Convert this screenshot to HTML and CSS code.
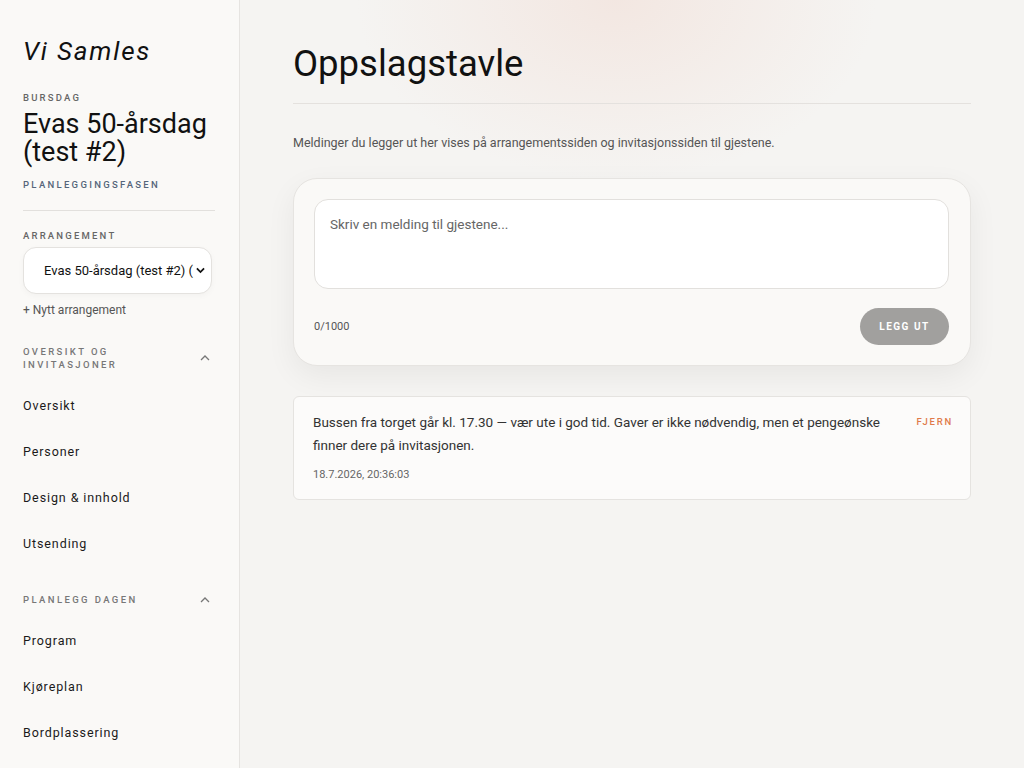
FILE: index.html
```html
<!DOCTYPE html>
<html lang="no">
<head>
    <meta charset="UTF-8">
    <meta name="viewport" content="width=device-width, initial-scale=1.0">
    <title>Oppslagstavle – Vi Samles</title>
    <link rel="stylesheet" href="styles.css">
</head>
<body>

    <aside class="sidebar">
        <div class="brand">Vi Samles</div>

        <div class="event-info">
            <div class="eyebrow">Bursdag</div>
            <h2 class="event-title">Evas 50-årsdag (test #2)</h2>
            <div class="phase">Planleggingsfasen</div>
        </div>

        <div class="event-picker">
            <div class="eyebrow">Arrangement</div>
            <div class="select-box">
                <span class="select-text">Evas 50-årsdag (test #2) (</span>
                <svg class="select-chevron" width="10" height="7" viewBox="0 0 10 7"><path d="M1 1.2 5 5.2 9 1.2" fill="none" stroke="#111" stroke-width="2"/></svg>
            </div>
            <a class="new-event">+ Nytt arrangement</a>
        </div>

        <nav class="nav-group">
            <div class="group-head">
                <span class="group-label">Oversikt og invitasjoner</span>
                <svg class="caret" width="10" height="6" viewBox="0 0 10 6"><path d="M1 5 5 1 9 5" fill="none" stroke="#777" stroke-width="1.3"/></svg>
            </div>
            <a class="nav-item">Oversikt</a>
            <a class="nav-item">Personer</a>
            <a class="nav-item">Design &amp; innhold</a>
            <a class="nav-item">Utsending</a>
        </nav>

        <nav class="nav-group">
            <div class="group-head">
                <span class="group-label">Planlegg dagen</span>
                <svg class="caret" width="10" height="6" viewBox="0 0 10 6"><path d="M1 5 5 1 9 5" fill="none" stroke="#777" stroke-width="1.3"/></svg>
            </div>
            <a class="nav-item">Program</a>
            <a class="nav-item">Kjøreplan</a>
            <a class="nav-item">Bordplassering</a>
        </nav>
    </aside>

    <main class="main">
        <div class="content">
            <h1 class="page-title">Oppslagstavle</h1>
            <p class="intro">Meldinger du legger ut her vises på arrangementssiden og invitasjonssiden til gjestene.</p>

            <div class="composer">
                <div class="composer-input">Skriv en melding til gjestene...</div>
                <div class="composer-foot">
                    <span class="counter">0/1000</span>
                    <button class="post-btn">Legg ut</button>
                </div>
            </div>

            <div class="post">
                <div class="post-body">
                    <p class="post-text">Bussen fra torget går kl. 17.30 — vær ute i god tid. Gaver er ikke nødvendig, men et pengeønske finner dere på invitasjonen.</p>
                    <div class="post-date">18.7.2026, 20:36:03</div>
                </div>
                <a class="remove">Fjern</a>
            </div>
        </div>
    </main>

</body>
</html>
```

FILE: styles.css
```css
* {
    box-sizing: border-box;
}

html, body {
    height: 100%;
}

body {
    margin: 0;
    display: flex;
    font-family: Roboto, "Liberation Sans", sans-serif;
    color: #151515;
    background: #f5f4f2;
    overflow: hidden;
}

/* Sidebar */
.sidebar {
    width: 240px;
    flex-shrink: 0;
    background: #faf9f7;
    border-right: 1px solid #e6e4e1;
    padding: 36px 23px 0 23px;
}

.brand {
    font-size: 26px;
    font-style: italic;
    letter-spacing: 1.8px;
    color: #111;
    margin-bottom: 26px;
}

.eyebrow {
    font-size: 9.5px;
    font-weight: 500;
    letter-spacing: 2.2px;
    text-transform: uppercase;
    color: #666;
}

.event-title {
    font-size: 27px;
    font-weight: 400;
    line-height: 28px;
    margin: 7px 0 13px;
    color: #111;
}

.phase {
    font-size: 9.5px;
    font-weight: 500;
    letter-spacing: 2.3px;
    text-transform: uppercase;
    color: #55657a;
}

.event-info {
    padding-bottom: 20px;
    border-bottom: 1px solid #e2e0dd;
    margin-right: 1px;
}

.event-picker {
    padding-top: 19px;
}

.select-box {
    display: flex;
    align-items: center;
    gap: 3px;
    height: 47px;
    width: 189px;
    margin-top: 6px;
    padding: 0 6px 0 20px;
    background: #fff;
    border: 1px solid #e4e2df;
    border-radius: 13px;
    box-shadow: 0 2px 6px rgba(0,0,0,0.03);
}

.select-text {
    flex: 1;
    font-size: 13px;
    color: #111;
    white-space: nowrap;
}

.new-event {
    display: block;
    margin-top: 9px;
    font-size: 12px;
    color: #555;
}

.nav-group {
    margin-top: 28px;
}

.nav-group + .nav-group {
    margin-top: 26px;
}

.group-head {
    display: flex;
    align-items: center;
    justify-content: space-between;
    padding-right: 6px;
    margin-bottom: 12px;
}

.group-label {
    font-size: 9.5px;
    font-weight: 500;
    letter-spacing: 2.4px;
    line-height: 13px;
    text-transform: uppercase;
    color: #777;
    width: 130px;
}

.nav-item {
    display: block;
    font-size: 12.5px;
    font-weight: 400;
    letter-spacing: 0.9px;
    color: #1a1a1a;
    padding: 15px 0;
    line-height: 16px;
}

/* Main */
.main {
    flex: 1;
    background:
        radial-gradient(ellipse 260px 180px at 48% 0%, rgba(240, 215, 205, 0.45), transparent),
        #f5f4f2;
}

.content {
    width: 678px;
    margin: 0 auto;
    padding-top: 42px;
}

.page-title {
    font-size: 36.5px;
    font-weight: 400;
    margin: 0;
    padding-bottom: 18px;
    border-bottom: 1px solid #e4e1de;
    color: #111;
}

.intro {
    font-size: 12.5px;
    color: #555;
    margin: 31px 0 28px;
}

.composer {
    background: #faf9f7;
    border: 1px solid #e6e4e1;
    border-radius: 24px;
    padding: 20px 21px 20px 20px;
    box-shadow: 0 10px 30px rgba(0,0,0,0.06);
}

.composer-input {
    height: 90px;
    background: #fff;
    border: 1px solid #e2e0dd;
    border-radius: 14px;
    padding: 16px 15px;
    font-size: 13.5px;
    color: #666;
}

.composer-foot {
    display: flex;
    align-items: center;
    justify-content: space-between;
    margin-top: 19px;
}

.counter {
    font-size: 11px;
    color: #555;
}

.post-btn {
    width: 89px;
    height: 37px;
    border: none;
    border-radius: 19px;
    background: #a1a09e;
    color: #fff;
    font-family: inherit;
    font-size: 10px;
    font-weight: 700;
    letter-spacing: 1.5px;
    text-transform: uppercase;
}

.post {
    display: flex;
    justify-content: space-between;
    gap: 20px;
    margin-top: 30px;
    background: #fcfbfa;
    border: 1px solid #e5e3e0;
    border-radius: 6px;
    padding: 14px 17px 18px 19px;
}

.post-text {
    margin: 0;
    font-size: 13.5px;
    line-height: 23px;
    color: #333;
}

.post-date {
    margin-top: 11px;
    font-size: 11px;
    color: #666;
}

.remove {
    font-size: 9.5px;
    font-weight: 500;
    letter-spacing: 1.8px;
    text-transform: uppercase;
    color: #e07a4a;
    margin-top: 5px;
    flex-shrink: 0;
}
```
